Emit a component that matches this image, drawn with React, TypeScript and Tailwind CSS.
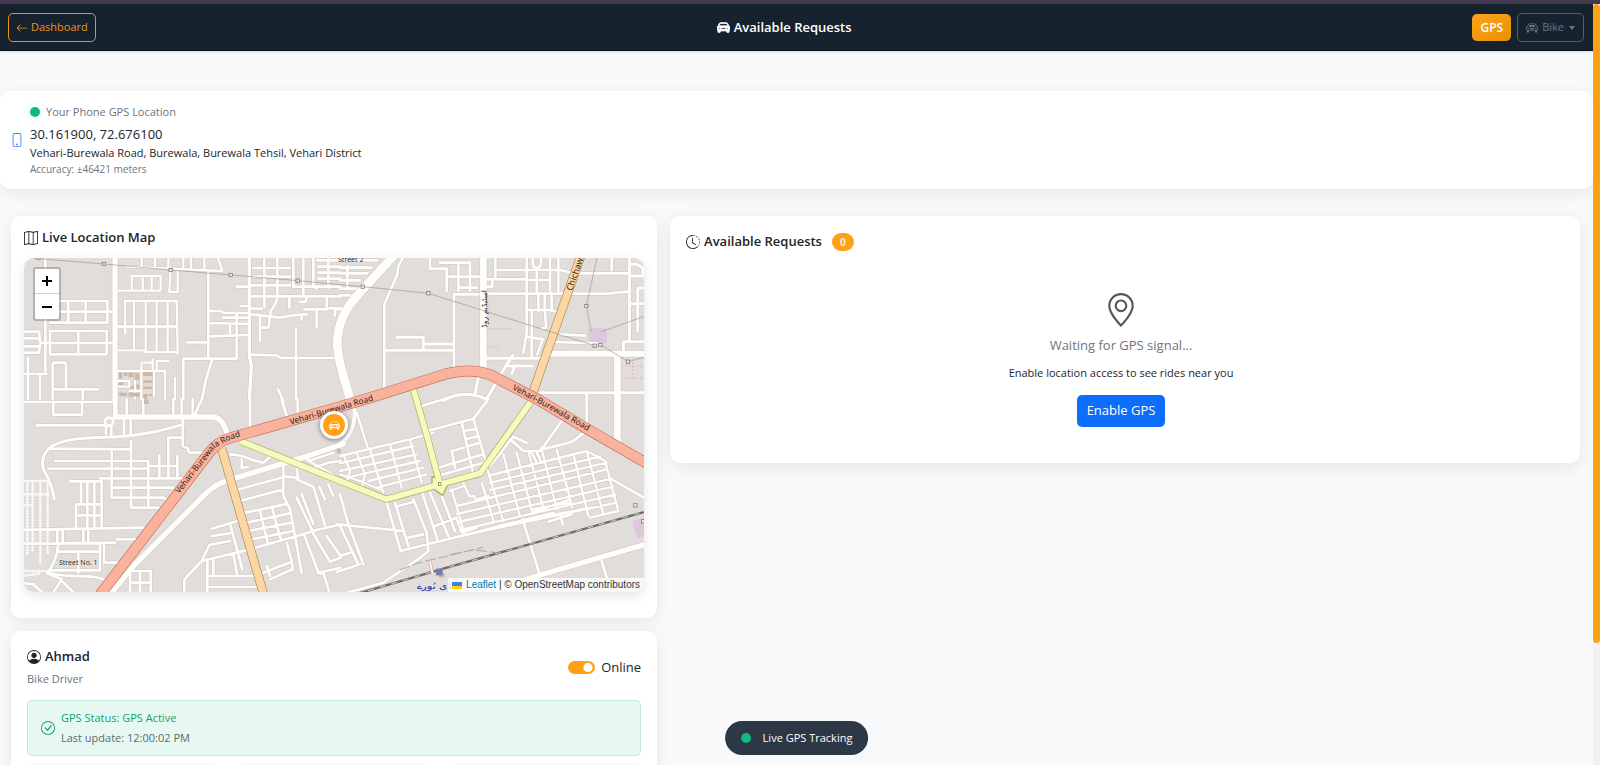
import type { ReactNode } from "react";
import {
  BsArrowLeft,
  BsCarFront,
  BsCarFrontFill,
  BsCheckCircle,
  BsClockHistory,
  BsGeoAlt,
  BsMap,
  BsPersonCircle,
  BsPhone,
} from "react-icons/bs";

type Street = { w: number; d: string };
type Tile = { x: number; y: number; streets: Street[] };

// Minor streets, grouped by map tile; coordinates are local to the tile.
const tiles: Tile[] = [
  {
    x: 0,
    y: 0,
    streets: [
      { w: 16, d: "M345 170V600" },
      { w: 10, d: "M748 170V470L754 500L748 600" },
      {
        w: 8,
        d: "M136 170V524M60 524H140M84 475V600M120 525V600M150 305H322V370H150M205 305V370M257 305V370M160 337H345M60 397H117L121 431L117 460H60M60 417H118M60 441H118M150 395H320V465H150ZM235 395V465M120 431H340M158 600V496Q158 490 164 490H190Q198 490 198 498V570M160 570H295M248 570V600",
      },
      {
        w: 7,
        d: "M356 274H482V230H395V270M428 230V272M455 230V272M380 202L667 215L652 170M425 170V200M465 170V203M505 170V203M512 210L508 278H533V215M550 170V208M573 176V210M613 170V212M375 403V305H530L533 465M402 305V448M437 305V455M470 305V455M503 305V455M356 453H430L435 458H533",
      },
      { w: 10, d: "M356 382H530" },
      {
        w: 8,
        d: "M625 218V475M560 429H622M628 335H665L670 341H745M670 355H745M628 371L750 374M628 411L748 407M710 340V475M690 375V405M550 600V478H708M637 478L618 540L606 600M710 262H750M722 320H748M760 206H870M760 232H870M756 258H870M793 176V290M832 176V290M756 291H1022M880 176V262H1022M910 180V290M940 176V258L950 268M950 183H1022M955 202H1022M955 220H1022M955 238H1022M985 170V265",
      },
      {
        w: 8,
        d: "M793 293V324M756 328H785M832 295L828 310L812 335L806 385H785M780 350V425M756 345L840 355L880 348L920 345M868 290V325M920 295L915 308H900M980 293V327H1022M912 330H980M950 332V385M905 345V362M1005 330V350M888 390V600M756 466L830 468L842 476H1000M834 570L850 606",
      },
      {
        w: 7,
        d: "M356 515H424V490H455M424 520V600M458 480V515M470 515V485H505M430 515H495V600M462 515V590M356 545H388V562M356 562H388M388 575H424M525 535V600M376 385V402M405 545V598",
      },
    ],
  },
  {
    x: 1020,
    y: 0,
    streets: [
      {
        w: 8,
        d: "M190 170L174 205L172 225L133 315V572M0 183H110M0 205H95M0 222H82M0 243H60M0 268H48M0 288H30M22 200V262M-15 330H0M270 170V208H320V275M300 190H390V275M325 232H420M355 190V275M355 265H410M342 510V285H415M440 240H457V262H440M466 170V235M466 212H660L700 222H870M445 240H560M440 283L800 283L870 276",
      },
      {
        w: 8,
        d: "M560 170V400L550 460M590 208V280M578 170V190Q578 205 590 205Q603 205 603 190V170M630 170V276M655 170V276M595 283V335M560 242H630M558 332H630L650 338M614 283V335M635 283V330M575 335V472M615 340L618 385L605 388M560 412L610 420M608 420L592 465M660 405L735 409M645 428L770 432",
      },
      {
        w: 9,
        d: "M815 170V212M868 170V425M868 195H890L908 205V230H868M868 313H912M893 395V266H912M850 460V427H912M440 477H610M518 468L485 520L440 600M505 500H578M525 500L515 523M135 453H340M170 414H250V445M255 434H340M600 580H912M740 580V600M415 535L405 585M310 604C350 580 400 580 440 600",
      },
      { w: 20, d: "M430 170V512M832 465V600" },
      { w: 18, d: "M635 463H920" },
      { w: 26, d: "M160 170L60 280C10 330-10 380-8 440C-4 500 15 540 30 600" },
    ],
  },
  {
    x: 0,
    y: 600,
    streets: [
      {
        w: 8,
        d: "M60 8H340M160 8V46H246V8M110 78H316M318 82V105M334 82V110M372 60V108M392 60V108M150 148L390 150M165 185H445M145 208H440M393 125V325H475M335 150V295H490L500 302M300 237H550M335 265H520M445 185V325M478 168V235M505 235V115H550M532 170V235M450 200H532M548 60V140L562 146L568 160H640M380 0V45M430 0V45M520 0V45M545 0V45M578 0V45M605 0L585 45",
      },
      {
        w: 8,
        d: "M210 246H305V385M243 246V310M262 246V385M283 246V385M228 388V315H303M228 348H303M60 392L430 385M60 433H165L345 430M172 392V433M188 392V430M250 392V430M265 392V430M350 420H410M175 433C172 470 160 500 140 522M175 457H300M300 433V513H145M235 457V520M312 433V490H360M145 520C220 540 280 520 320 545M60 550L100 555L125 578M140 522L185 540L162 576M185 545L222 580M60 570L90 580M385 515H452V580M390 515V580M420 515V580M390 550H450",
      },
      { w: 9, d: "M550 75C480 95 430 108 350 112C250 115 200 118 160 138C120 165 122 200 138 225C155 255 158 275 163 298" },
      { w: 14, d: "M346 0V50" },
      { w: 16, d: "M345 53H640C665 55 672 80 685 110" },
      { w: 16, d: "M335 580L400 500L600 300C640 258 660 250 700 238L930 168L1030 134" },
      {
        w: 8,
        d: "M690 165C730 165 740 180 790 190L810 172M725 180V205L745 203M750 0V90M845 0L860 50M893 0V45M710 272L855 232L895 235L890 210M850 195V290L870 330L885 410M720 305L850 270M735 340L855 315M635 388L690 372L735 358M635 410L690 402M690 372L727 510M740 370L868 342M745 395L875 370M755 420L880 395M780 335L803 430M815 322L843 422",
      },
      {
        w: 8,
        d: "M553 580V540L605 485L750 450L890 410L950 392L1022 375M605 485L628 437L690 425M622 480V580M640 480V528M700 465L712 530M620 530H760M620 563H770M790 520L875 487L878 510L810 540M800 500L810 530M860 430L875 487M890 240L940 262L975 378M890 295L940 400M905 285L940 375M958 262L975 300M985 255L1000 290M915 178L1022 240M925 185L1000 160M940 205L985 190L1022 185M885 410L905 522M912 405L955 520L972 525L988 580M935 395L990 487L1022 475M980 410L1022 470M955 520L1022 505",
      },
    ],
  },
  {
    x: 1020,
    y: 600,
    streets: [
      { w: 12, d: "M-10 140C30 120 50 70 42 22" },
      {
        w: 7,
        d: "M50 40L85 150M0 170L210 120L280 100M0 192L220 140M0 215L230 165M20 235L240 185M85 245L250 205M110 265L260 225M50 160L75 225L65 265M90 150L130 280M150 135L185 265M210 120L245 250M10 165L30 215L20 250M0 225L60 245L130 275",
      },
      {
        w: 8,
        d: "M245 20L360-15M250 98L400 58L445 0M400 58L438 190M365 70L398 215M372 95L410 88M378 120L415 110M335 155L372 145M335 155L345 205M385 140L420 130M280 210L430 165M300 228L430 190M450 200L520 112L560 130M480 165L510 120L550 155L600 155L605 145M605 150L665 65M605 150L690 130C710 120 715 110 740 95M815 240L912 295M740 0V80",
      },
      {
        w: 7,
        d: "M450 228L740 155L795 185L835 335L750 355M450 250L780 172M450 272L800 190M350 320L800 210M350 344L815 238M355 368L820 262M360 392L825 286M370 408L830 310M480 378L750 325M575 340L690 300M575 330L690 310M440 205L490 365M490 165L540 352M530 160L578 345M565 155L612 335M605 150L650 330M650 150L697 325M700 165L745 350M740 155L790 345M335 270L372 400M330 275L372 260M370 250L388 292L402 290L408 300L445 290M425 250L462 370M350 360L365 400L410 385",
      },
      {
        w: 8,
        d: "M140 310L182 455L640 340M165 310L205 440M220 300L260 400L265 455C240 480 200 500 130 550L20 580M245 275L292 420M270 280L325 410M305 290L345 395M175 320L220 308M205 415L250 405M285 380L350 355M-10 375L190 395M0 285L25 375L70 495M0 380L52 490M-10 518L60 495M0 470L30 460M548 360L600 530M625 367L695 345M660 340L668 375M575 160L590 190M590 160L605 190M785 485L800 535",
      },
      { w: 20, d: "M832 0V135" },
      { w: 16, d: "M440 578L600 527L920 434" },
    ],
  },
];

const primaryRoad =
  "M300 1186L520 900L630 757Q655 726 690 716L1020 622L1120 592L1340 523Q1410 505 1470 526L1620 604L1760 688L1940 792";
const secondaryRoads = "M1744 165L1600 575M665 748L720 940L792 1190";
const tertiaryRoads = "M720 725L1020 845L1160 900L1320 855L1440 822L1592 608M1240 570L1278 700L1320 855";
const railway = "M1070 1184L1330 1108L1931 938";
const powerLines =
  "M72 172L115 178L312 194L512 212L692 227L893 244L1088 262L1285 282L1784 439M1792 170L1759 320L1773 395M1802 398L1936 350M1801 436L1884 487L1936 473";
const towers: [number, number][] = [
  [115, 176], [312, 194], [512, 212], [692, 227], [893, 244], [1088, 262],
  [1285, 282], [1759, 320], [1784, 439], [1801, 437], [1884, 487], [1906, 918], [1929, 966],
];
const buildings: [number, number, number, number][] = [
  [357, 520, 10, 18], [372, 520, 10, 10], [385, 520, 16, 14], [404, 522, 14, 20], [357, 549, 12, 8],
  [392, 560, 10, 8], [410, 556, 8, 12], [357, 580, 24, 10], [386, 580, 32, 12], [430, 518, 28, 12],
  [430, 543, 28, 8], [430, 562, 26, 7], [430, 584, 12, 14], [446, 584, 10, 6], [432, 600, 14, 14],
  [1010, 748, 12, 14], [1316, 1122, 18, 12],
];

function MapArt() {
  return (
    <svg
      className="block h-full w-full"
      viewBox="72 176 1860 1002"
      preserveAspectRatio="xMidYMid slice"
      role="img"
      aria-label="Street map"
    >
      <defs>
        <path id="south" d="M538 884L640 752Q665 726 732 708" />
        <path id="centre" d="M872 676L1190 583" />
        <path id="east" d="M1536 570L1620 614L1790 710" />
      </defs>
      <rect x="72" y="176" width="1860" height="1002" fill="#e0dddb" />
      <g fill="#dfc6dd">
        <rect x="1765" y="387" width="55" height="45" />
        <path d="M1896 966L1932 954V1010L1912 1018Z" />
      </g>
      <g fill="none" strokeLinejoin="round" strokeLinecap="round">
        {tiles.map((t) => (
          <g key={`c${t.x}-${t.y}`} transform={`translate(${t.x} ${t.y})`} stroke="#cbc7c4">
            {t.streets.map((s) => (
              <path key={s.d} d={s.d} strokeWidth={s.w + 3} />
            ))}
          </g>
        ))}
        <circle cx="327" cy="667" r="12" stroke="#fffefb" strokeWidth="8" />
        {tiles.map((t) => (
          <g key={`f${t.x}-${t.y}`} transform={`translate(${t.x} ${t.y})`} stroke="#fffefb">
            {t.streets.map((s) => (
              <path key={s.d} d={s.d} strokeWidth={s.w} />
            ))}
          </g>
        ))}
        <path
          d="M82 845V1065M98 845V1060M121 845V1092M143 845V1065M72 845H150M72 885H150M72 918H98M72 1115H140M72 1130L120 1122"
          stroke="#fbf9f7"
          strokeWidth="8"
          strokeDasharray="1 8"
        />
        <path d="M1865 500H1932M1865 537H1932M1898 478V537" stroke="#f7a99f" strokeWidth="3" strokeDasharray="5 6" strokeLinecap="butt" />
        <path d="M1460 388H1535M1460 442H1495" stroke="#c9c5c1" strokeWidth="2" />
      </g>
      <g fill="#cdb8a7">
        {buildings.map(([x, y, w, h]) => (
          <rect key={`${x}-${y}`} x={x} y={y} width={w} height={h} />
        ))}
      </g>
      <g fill="none" strokeLinejoin="round">
        <path d={railway} stroke="#6d6b69" strokeWidth="7" />
        <path d={railway} stroke="#cfccc9" strokeWidth="3" strokeDasharray="18 18" />
        <path d="M1200 1112L1250 1092L1448 1044M1350 1066L1420 1052L1490 1060" stroke="#aaa7a4" strokeWidth="3" strokeDasharray="32 8" />
        <path d={tertiaryRoads} stroke="#a9ad5c" strokeWidth="21" />
        <path d="M1296 832L1346 850L1328 888L1296 866Z" fill="#f6fabb" stroke="#a9ad5c" strokeWidth="4" />
        <path d={tertiaryRoads} stroke="#f6fabb" strokeWidth="17" />
        <path d={secondaryRoads} stroke="#b08a4a" strokeWidth="27" />
        <path d={secondaryRoads} stroke="#fcd6a4" strokeWidth="23" />
        <path d={primaryRoad} stroke="#d0705a" strokeWidth="33" />
        <path d={primaryRoad} stroke="#f9b29c" strokeWidth="29" />
        <path d={powerLines} stroke="#9a9794" strokeWidth="2" />
        <path d="M1290 1088L1298 1125" stroke="#e4a59a" strokeWidth="10" />
        <path d="M1290 1088L1298 1125" stroke="#ffffff" strokeWidth="5" />
      </g>
      <g fill="#e8e5e3" stroke="#6f6c6a" strokeWidth="2">
        {towers.map(([x, y]) => (
          <rect key={`${x}-${y}`} x={x - 5} y={y - 5} width="10" height="10" />
        ))}
        <rect x="1315" y="850" width="8" height="8" fill="#f6fabb" />
      </g>
      <rect x="1308" y="1108" width="20" height="20" fill="#757bab" />
      <g fontFamily="'Noto Sans', 'Open Sans', sans-serif" fontSize="25" fill="#2c211e">
        <text>
          <textPath href="#south">Vehari-Burewala Road</textPath>
        </text>
        <text>
          <textPath href="#centre">Vehari-Burewala Road</textPath>
        </text>
        <text>
          <textPath href="#east">Vehari-Burewala Road</textPath>
        </text>
        <text transform="translate(1716 276) rotate(-71)" fontSize="26">
          Chichawatni Road
        </text>
        <g fontSize="21" stroke="#f4f2f0" strokeWidth="2" paintOrder="stroke">
          <text x="1014" y="189">Street 2</text>
          <text x="177" y="1096">Street No. 1</text>
          <text transform="translate(1460 385) rotate(-90)" fontFamily="'DejaVu Sans', sans-serif" fontSize="23">
            اسٹیڈیم روڈ
          </text>
        </g>
        <text
          x="1250"
          y="1170"
          fontSize="27"
          fontWeight="700"
          fontFamily="'DejaVu Sans', sans-serif"
          fill="#4b54a8"
          stroke="#f2f0ee"
          strokeWidth="3"
          paintOrder="stroke"
        >
          منڈی بُورے
        </text>
      </g>
    </svg>
  );
}

function Card({ className, children }: { className: string; children: ReactNode }) {
  return (
    <section className={`rounded-[10px] bg-white shadow-[0_4px_16px_rgba(0,0,0,0.08)] ${className}`}>{children}</section>
  );
}

function Header() {
  return (
    <header className="flex shrink-0 items-center justify-between border-b border-[#0d1620] bg-[#16222e] px-2 pt-[9px] pb-2 shadow-sm">
      <a
        href="#dashboard"
        className="flex h-[29px] items-center gap-[3px] rounded-[5px] border border-[#e8951a] px-[7px] text-[11px] font-medium text-[#e8951a]"
      >
        <BsArrowLeft size={12} />
        Dashboard
      </a>
      <h1 className="flex items-center gap-1 text-[13px] font-semibold text-white">
        <BsCarFrontFill size={13} className="stroke-1" />
        Available Requests
      </h1>
      <div className="flex items-center gap-[6px]">
        <button className="h-[27px] rounded-[5px] bg-linear-to-br from-[#ffa31a] to-[#e69000] px-2 text-[12px] font-semibold text-white">
          GPS
        </button>
        <button className="mr-px flex h-[29px] items-center gap-1 rounded-[5px] border border-[#565f69] px-2 text-[11px] text-[#6c757d]">
          <BsCarFront size={12} />
          Bike
          <svg width="6" height="4" viewBox="0 0 6 4" className="ml-px" aria-hidden="true">
            <path d="M0 0h6L3 4z" fill="currentColor" />
          </svg>
        </button>
      </div>
    </header>
  );
}

export default function App() {
  return (
    <div className="flex h-screen flex-col overflow-hidden bg-[#f8f9fb] font-['Open_Sans','Noto_Sans',sans-serif] text-[#212529]">
      <div className="h-1 shrink-0 bg-[#433a4d]" />
      <div className="flex min-h-0 flex-1">
        <div className="relative flex min-w-0 flex-1 flex-col overflow-hidden">
          <Header />

          <Card className="mt-10 flex shrink-0 items-center gap-[6px] px-[10px] py-[11px]">
            <BsPhone size={14} className="shrink-0 text-[#3b82f6]" />
            <div>
              <p className="flex h-5 items-center gap-[6px] text-[11px] text-[#6c757d]">
                <span className="size-[10px] rounded-full bg-[#10b981] shadow-[0_0_0_7px_rgba(16,185,129,0.02)]" />
                Your Phone GPS Location
              </p>
              <p className="text-[13px] leading-6">30.161900, 72.676100</p>
              <p className="text-[11px] leading-[14px]">Vehari-Burewala Road, Burewala, Burewala Tehsil, Vehari District</p>
              <p className="text-[10px] leading-[18px] text-[#6c757d]">Accuracy: ±46421 meters</p>
            </div>
          </Card>

          <main className="mt-[27px] grid shrink-0 grid-cols-[71fr_100fr] items-start gap-[13px] pr-[13px] pl-[11px]">
            <div className="flex flex-col gap-[13px]">
              <Card className="px-[13px] pt-3 pb-[26px]">
                <h2 className="flex h-5 items-center gap-1 text-[13px] font-semibold">
                  <BsMap size={14} />
                  Live Location Map
                </h2>
                <div className="relative mt-[10px] h-[334px] overflow-hidden rounded-[10px] shadow-[0_4px_12px_rgba(0,0,0,0.1)]">
                  <MapArt />
                  <div className="absolute top-[9px] left-[9px] flex w-[28px] flex-col overflow-hidden rounded-[3px] border-2 border-black/20 bg-white bg-clip-padding text-black">
                    <button aria-label="Zoom in" className="flex h-[25px] items-center justify-center border-b border-[#ccc]">
                      <svg width="10" height="10" viewBox="0 0 10 10" aria-hidden="true">
                        <path d="M5 0v10M0 5h10" stroke="currentColor" strokeWidth="2" />
                      </svg>
                    </button>
                    <button aria-label="Zoom out" className="flex h-[25px] items-center justify-center">
                      <svg width="10" height="10" viewBox="0 0 10 10" aria-hidden="true">
                        <path d="M0 5h10" stroke="currentColor" strokeWidth="2" />
                      </svg>
                    </button>
                  </div>
                  <div className="absolute top-1/2 left-1/2 flex size-[28px] -translate-1/2 items-center justify-center rounded-full border-3 border-white bg-[#ffa116] text-[#fff3dd] shadow-[0_1px_5px_rgba(0,0,0,0.45)]">
                    <BsCarFrontFill size={11} />
                  </div>
                  <div className="absolute right-0 bottom-0 flex h-[14px] items-center gap-1 bg-white/80 px-1 font-['Liberation_Sans',sans-serif] text-[10px] leading-[14px] whitespace-nowrap text-[#333]">
                    <svg width="10" height="7" viewBox="0 0 10 7" aria-hidden="true">
                      <path d="M0 0h10v4H0z" fill="#4c7be1" />
                      <path d="M0 4h10v3H0z" fill="#ffd500" />
                    </svg>
                    <span>
                      <a href="#leaflet" className="text-[#0078a8]">
                        Leaflet
                      </a>{" "}
                      | © OpenStreetMap contributors
                    </span>
                  </div>
                </div>
              </Card>

              <Card className="px-4 pt-4 pb-4">
                <div className="flex items-start justify-between">
                  <div>
                    <h2 className="flex h-5 items-center gap-1 text-[13px] font-semibold">
                      <BsPersonCircle size={14} />
                      Ahmad
                    </h2>
                    <p className="text-[11px] leading-6 text-[#6c757d]">Bike Driver</p>
                  </div>
                  <label className="mt-[10px] flex items-center gap-[6px] text-[13px] leading-5">
                    <input
                      type="checkbox"
                      role="switch"
                      defaultChecked
                      className="h-[13px] w-[27px] appearance-none rounded-full bg-[#ffa116] bg-[radial-gradient(circle_at_20px_50%,white_4px,transparent_5px)]"
                    />
                    Online
                  </label>
                </div>
                <div className="mt-[9px] flex items-center gap-[6px] rounded-[5px] border border-[#bfeadb] bg-[#e7f8f2] px-[13px] py-[7px]">
                  <BsCheckCircle size={14} className="text-[#1a9e74]" />
                  <div className="text-[11px] leading-5">
                    <p className="text-[#10a070]">GPS Status: GPS Active</p>
                    <p className="text-[#5c6b6b]">Last update: 12:00:02 PM</p>
                  </div>
                </div>
                <div className="mt-[7px] grid grid-cols-3 gap-5">
                  <div className="h-14 rounded-md bg-[#f8f9fb]" />
                  <div className="h-14 rounded-md bg-[#f8f9fb]" />
                  <div className="h-14 rounded-md bg-[#f8f9fb]" />
                </div>
              </Card>
            </div>

            <Card className="px-4 pt-4 pb-9">
              <h2 className="flex h-5 items-center text-[13px] font-semibold">
                <BsClockHistory size={14} className="mr-1" />
                Available Requests
                <span className="ml-[10px] rounded-full bg-[#ffa116] px-2 text-[10px] leading-[18px] text-white">0</span>
              </h2>
              <div className="mt-[41px] flex flex-col items-center pr-2">
                <BsGeoAlt size={34} className="text-[#50575d]" />
                <p className="mt-2 text-[13px] leading-5 text-[#6c757d]">Waiting for GPS signal...</p>
                <p className="mt-2 text-[11px] leading-5">Enable location access to see rides near you</p>
                <button className="mt-3 h-8 rounded-[5px] bg-[#0d6efd] px-[10px] text-[13px] text-white">Enable GPS</button>
              </div>
            </Card>
          </main>

          <div className="absolute bottom-[10px] left-1/2 flex h-[34px] -translate-x-1/2 items-center gap-3 rounded-full bg-[#2c3845] px-4 text-[11px] font-medium text-white">
            <span className="size-[10px] rounded-full bg-[#10b981]" />
            Live GPS Tracking
          </div>
        </div>
        <div className="w-[7px] shrink-0 bg-[#f1f1f1]">
          <div className="h-[84%] rounded-[4px] bg-[#ffa116]" />
        </div>
      </div>
    </div>
  );
}
